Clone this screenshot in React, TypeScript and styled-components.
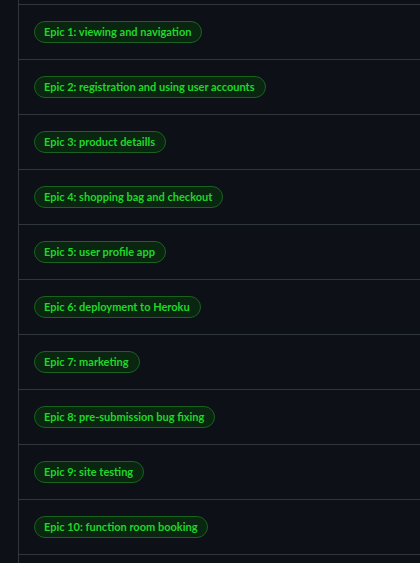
import React from "react";
import styled, { createGlobalStyle } from "styled-components";

const Global = createGlobalStyle`
  html, body { margin: 0; padding: 0; background: #0d1117; }
  body { width: 420px; height: 563px; overflow: hidden; }
`;

const Page = styled.div`
  display: flex;
  width: 420px;
  height: 563px;
  background: #0d1117;
`;

const Gutter = styled.div`
  width: 18px;
  flex: none;
  border-right: 1px solid #30363d;
`;

const List = styled.div`
  flex: 1;
  display: flex;
  flex-direction: column;
  padding-top: 4px;
`;

const Row = styled.div`
  border-top: 1px solid #30363d;
  padding: 16px 15px;
  display: flex;
  align-items: center;
  flex: none;
`;

const Last = styled.div`
  border-top: 1px solid #30363d;
  flex: 1;
`;

const Label = styled.span`
  display: inline-flex;
  align-items: center;
  height: 22px;
  box-sizing: border-box;
  padding: 0 10px 0 9px;
  border: 1px solid #17631f;
  border-radius: 11px;
  background: #0a2610;
  color: #20d62a;
  font-family: Lato, "Noto Sans", sans-serif;
  font-weight: 700;
  font-size: 11px;
  line-height: 20px;
  white-space: nowrap;
`;

const epics = [
  "Epic 1: viewing and navigation",
  "Epic 2: registration and using user accounts",
  "Epic 3: product detaills",
  "Epic 4: shopping bag and checkout",
  "Epic 5: user profile app",
  "Epic 6: deployment to Heroku",
  "Epic 7: marketing",
  "Epic 8: pre-submission bug fixing",
  "Epic 9: site testing",
  "Epic 10: function room booking",
];

export default function App() {
  return (
    <>
      <Global />
      <Page>
        <Gutter />
        <List>
          {epics.map((e) => (
            <Row key={e}>
              <Label>{e}</Label>
            </Row>
          ))}
          <Last />
        </List>
      </Page>
    </>
  );
}
